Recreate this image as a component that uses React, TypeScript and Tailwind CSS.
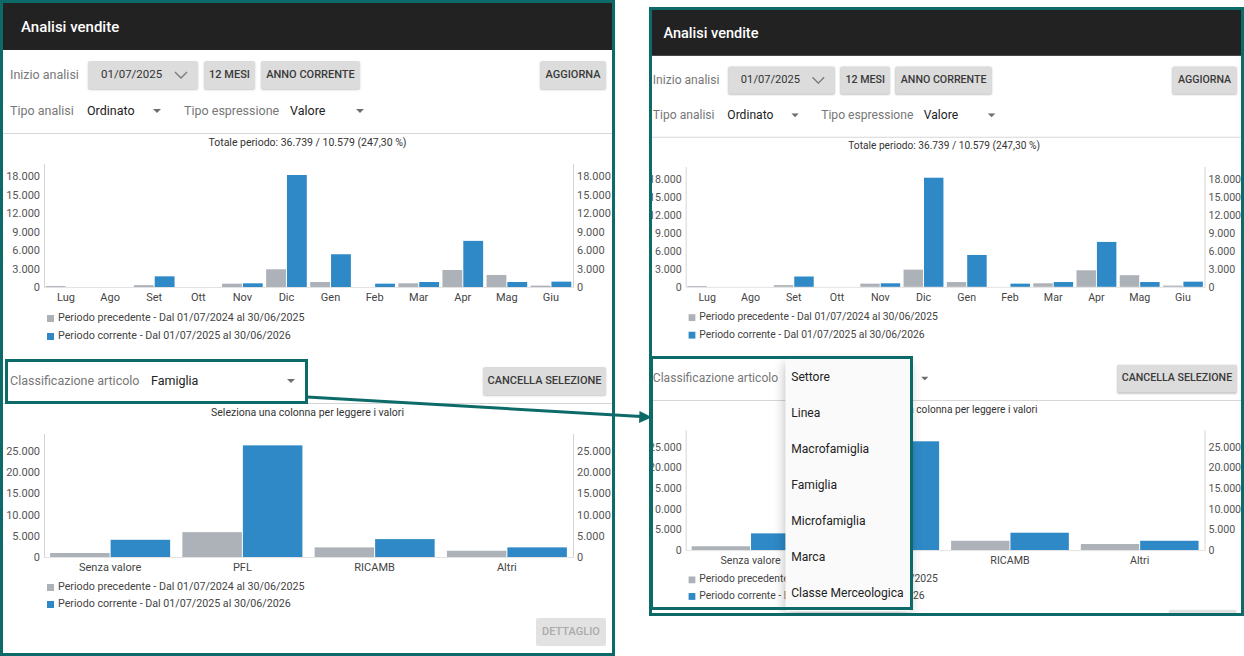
import React from 'react';

type Item = { label: string; prev: number; cur: number };

const mesi: Item[] = [
  { label: 'Lug', prev: 150, cur: 0 },
  { label: 'Ago', prev: 0, cur: 0 },
  { label: 'Set', prev: 300, cur: 1730 },
  { label: 'Ott', prev: 0, cur: 0 },
  { label: 'Nov', prev: 540, cur: 600 },
  { label: 'Dic', prev: 2870, cur: 18160 },
  { label: 'Gen', prev: 810, cur: 5310 },
  { label: 'Feb', prev: 0, cur: 540 },
  { label: 'Mar', prev: 600, cur: 810 },
  { label: 'Apr', prev: 2760, cur: 7480 },
  { label: 'Mag', prev: 1950, cur: 810 },
  { label: 'Giu', prev: 220, cur: 870 },
];

const famiglie: Item[] = [
  { label: 'Senza valore', prev: 940, cur: 4060 },
  { label: 'PFL', prev: 5860, cur: 26330 },
  { label: 'RICAMB', prev: 2270, cur: 4220 },
  { label: 'Altri', prev: 1480, cur: 2270 },
];

const classificazioni = ['Settore', 'Linea', 'Macrofamiglia', 'Famiglia', 'Microfamiglia', 'Marca', 'Classe Merceologica'];

const fmt = (n: number) => String(n).replace(/\B(?=(\d{3})+(?!\d))/g, '.');

const Caret = () => (
  <svg width="8" height="4" viewBox="0 0 8 4" className="shrink-0">
    <polygon points="0,0 8,0 4,4" fill="#6f6f6f" />
  </svg>
);

const Chevron = () => (
  <svg width="14" height="8" viewBox="0 0 14 8" fill="none">
    <polyline points="1,1 7,7 13,1" stroke="#7a7a7a" strokeWidth="1.4" />
  </svg>
);

const Btn = ({ children, className = '', disabled }: { children: React.ReactNode; className?: string; disabled?: boolean }) => (
  <button
    className={
      'h-[28px] rounded-[2px] bg-[#dcdcdc] shadow-[0_1px_2px_rgba(0,0,0,0.22)] text-[11px] font-medium uppercase shrink-0 ' +
      (disabled ? 'text-[#ababab] ' : 'text-[#3a3a3a] ') +
      className
    }
  >
    {children}
  </button>
);

function Chart({ width, data, step, tickPx, ticks }: { width: number; data: Item[]; step: number; tickPx: number; ticks: number[] }) {
  const left = 41;
  const right = width - 39;
  const base = 135;
  const top = 12;
  const cw = (right - left) / data.length;
  const bw = cw * 0.45;
  const y = (v: number) => base - (v / step) * tickPx;
  return (
    <svg width={width} height={157} className="block">
      <line x1={left + 0.5} y1={top} x2={left + 0.5} y2={base} stroke="#d4d4d4" />
      <line x1={right + 0.5} y1={top} x2={right + 0.5} y2={base} stroke="#d4d4d4" />
      {ticks.map((t) => (
        <g key={t}>
          <text x={left - 4} y={y(t) + 4} textAnchor="end" fontSize="11" fill="#555">{fmt(t)}</text>
          <text x={right + 4} y={y(t) + 4} textAnchor="start" fontSize="11" fill="#555">{fmt(t)}</text>
        </g>
      ))}
      {data.map((d, i) => {
        const c = left + cw * (i + 0.5);
        const hp = base - y(d.prev);
        const hc = base - y(d.cur);
        return (
          <g key={d.label}>
            {hp > 0 && <rect x={c - bw - 0.5} y={base - hp} width={bw} height={hp} fill="#adb2b9" />}
            {hc > 0 && <rect x={c + 0.5} y={base - hc} width={bw} height={hc} fill="#2f89c6" />}
            <text x={c} y={149} textAnchor="middle" fontSize="11" fill="#444">{d.label}</text>
          </g>
        );
      })}
      <line x1={left} y1={base + 0.5} x2={right + 1} y2={base + 0.5} stroke="#e2e2e2" />
    </svg>
  );
}

const Legend = ({ rowClass }: { rowClass: string }) => (
  <div className="pl-[44px] text-[10.7px] text-[#444]">
    <div className={'flex items-center gap-[4px] ' + rowClass}>
      <span className="w-[7px] h-[7px] bg-[#adb2b9]" />
      Periodo precedente - Dal 01/07/2024 al 30/06/2025
    </div>
    <div className={'flex items-center gap-[4px] ' + rowClass}>
      <span className="w-[7px] h-[7px] bg-[#2f89c6]" />
      Periodo corrente - Dal 01/07/2025 al 30/06/2026
    </div>
  </div>
);

function Screen({ width, menu, className = '' }: { width: number; menu?: boolean; className?: string }) {
  return (
    <div className={'relative bg-white shrink-0 ' + className}>
      <div className="h-[47px] bg-[#222] flex items-center pl-[18px] pt-[2px] text-white text-[15px] font-medium">
        Analisi vendite
      </div>

      <div className="flex items-center pt-[11px] pl-[7px] pr-[6px]">
        <span className="w-[78px] text-[12.5px] text-[#777]">Inizio analisi</span>
        <Btn className="w-[110px] flex items-center justify-between pl-[13px] pr-[10px]">
          <span className="text-[11.5px] font-normal text-[#333]">01/07/2025</span>
          <Chevron />
        </Btn>
        <Btn className="w-[51px] ml-[6px]">12 Mesi</Btn>
        <Btn className="w-[99px] ml-[6px]">Anno corrente</Btn>
        <Btn className="w-[66px] ml-auto">Aggiorna</Btn>
      </div>

      <div className="flex items-center h-[28px] mt-[8px] pl-[7px] text-[12.5px]">
        <span className="w-[77px] text-[#777]">Tipo analisi</span>
        <span className="w-[74px] flex items-center justify-between text-[#222]">
          Ordinato
          <Caret />
        </span>
        <span className="w-[106px] ml-[23px] text-[#777]">Tipo espressione</span>
        <span className="w-[74px] flex items-center justify-between text-[#222]">
          Valore
          <Caret />
        </span>
      </div>

      <div className="mt-[8px] border-t border-[#d6d6d6]" />
      <div className="h-[18px] flex items-center justify-center text-[10.5px] text-[#333]">
        Totale periodo: 36.739 / 10.579 (247,30 %)
      </div>

      <Chart width={width} data={mesi} step={3000} tickPx={18.5} ticks={[0, 3000, 6000, 9000, 12000, 15000, 18000]} />
      <Legend rowClass="h-[18px]" />

      <div className="mt-[14px] h-[44px] flex items-center pl-[7px] pr-[6px] text-[12.5px]">
        <span className="w-[141px] text-[#777]">Classificazione articolo</span>
        <span className="w-[144px] flex items-center justify-between text-[#222]">
          Famiglia
          <Caret />
        </span>
        <Btn className="w-[123px] ml-auto">Cancella selezione</Btn>
      </div>
      <div className="border-t border-[#d6d6d6]" />
      <div className="h-[18px] flex items-center justify-center text-[10.5px] text-[#333]">
        Seleziona una colonna per leggere i valori
      </div>

      <Chart width={width} data={famiglie} step={5000} tickPx={21.2} ticks={[0, 5000, 10000, 15000, 20000, 25000]} />
      <Legend rowClass="h-[17px]" />

      <div className="flex justify-end pr-[6px] mt-[5px] pb-[7px]">
        <Btn className="w-[70px] bg-[#e2e2e2] shadow-none" disabled>
          Dettaglio
        </Btn>
      </div>

      {menu && (
        <div className="absolute left-[144px] top-[358px] w-[129px] bg-[#fafafa] shadow-[0_4px_12px_rgba(0,0,0,0.3)]">
          {classificazioni.map((c) => (
            <div key={c} className="h-[37px] flex items-center pl-[6px] text-[12.5px] text-[#222]">
              {c}
            </div>
          ))}
        </div>
      )}
    </div>
  );
}

export default function App() {
  return (
    <div className="relative w-[1244px] h-[656px] bg-white overflow-hidden flex items-start font-['Roboto',sans-serif]">
      <div className="w-[615px] h-[656px] border-[3px] border-[#0c6b69] overflow-hidden shrink-0">
        <Screen width={609} className="w-[609px]" />
      </div>

      <div className="ml-[34px] mt-[7px] w-[595px] h-[609px] border-[3px] border-[#0c6b69] overflow-hidden shrink-0">
        <Screen width={616} menu className="w-[616px] -ml-[6px] origin-top-left scale-x-[0.968] scale-y-[0.975]" />
      </div>

      {/* annotations */}
      <div className="absolute left-[5px] top-[359px] w-[303px] h-[45px] border-[3px] border-[#0c6b69]" />
      <div className="absolute left-[650px] top-[356px] w-[263px] h-[254px] border-[3px] border-[#0c6b69]" />
      <svg className="absolute inset-0 pointer-events-none" width="1244" height="656">
        <line x1="307" y1="397" x2="641" y2="416.5" stroke="#0c6b69" strokeWidth="3" />
        <polygon points="652,417.2 639.5,411 639,423" fill="#0c6b69" />
      </svg>
    </div>
  );
}
